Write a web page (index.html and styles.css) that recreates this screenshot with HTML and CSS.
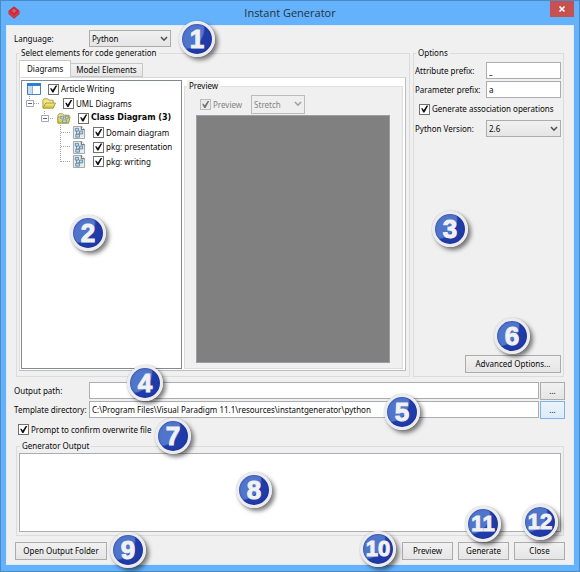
FILE: index.html
```html
<!DOCTYPE html>
<html lang="en">
<head>
<meta charset="utf-8">
<title>Instant Generator</title>
<link rel="stylesheet" href="styles.css">
</head>
<body>
<svg class="defs" aria-hidden="true">
  <defs>
    <linearGradient id="folder" x1="0" y1="0" x2="0" y2="1"><stop offset="0" stop-color="#f8f3a0"/><stop offset="1" stop-color="#cdb92e"/></linearGradient>
    <symbol id="chevron" viewBox="0 0 8 6"><path d="M1 1l3 3.2L7 1" fill="none" stroke="currentColor" stroke-width="1.6"/></symbol>
    <symbol id="i-folder" viewBox="0 0 15 13">
      <path d="M1 11V3l1-1.5h4L7.500 3H12v3" fill="#f3e98a" stroke="#a39a50"/>
      <path d="M1 11.500L4 6h10.500L12 11.500z" fill="url(#folder)" stroke="#a7962d"/>
    </symbol>
    <symbol id="i-class" viewBox="0 0 15 13">
      <path d="M1 11V3l1-1.500h4L7.500 3H13v3" fill="#ece49a" stroke="#a39a50"/>
      <path d="M1 11.500V5h13l-1.500 6.500z" fill="url(#folder)" stroke="#a7962d"/>
      <path d="M4 4h3v3H4zM9 4h3v3H9zM6 8h4v3H6z" fill="#bcd6e4" stroke="#658696" stroke-width=".7"/>
    </symbol>
    <symbol id="i-diagram" viewBox="0 0 14 14">
      <path d="M1 .5h9L13 4v9.500H1z" fill="#e6ebee" stroke="#9aa1a6"/>
      <path d="M9.500.500V4H13" fill="#fff" stroke="#555"/>
      <path d="M4.500 5v5M9 6L6 9" stroke="#54748c" fill="none"/>
      <path d="M3 2.500h3.500v3H3zM7.500 5.500H11v3H7.500zM3.500 9h4v3h-4z" fill="#b4d9f3" stroke="#54748c" stroke-width=".8"/>
    </symbol>
  </defs>
</svg>
<div class="window">
  <header class="titlebar">
    <svg class="logo" viewBox="0 0 12 13" aria-hidden="true"><path d="M6 .300l5.500 4.500v3.200L6 12.700.500 8V4.800z" fill="#d8282f"/><path d="M3.500 4.800L6 2.800l2.500 2L6 7z" fill="#b06c86"/><path d="M1 6.500l5 4.200 5-4.200M6 4v3" fill="none" stroke="#a86a88" stroke-width=".7"/></svg>
    <h1 class="title">Instant Generator</h1>
    <button class="close" type="button" aria-label="Close window"><svg viewBox="0 0 8 8"><path d="M1.500 1.500l5 5M6.500 1.500l-5 5" stroke="#fff" stroke-width="1.600"/></svg></button>
  </header>
  <main class="content">
    <div class="row language">
      <label class="row-label" for="lang">Language:</label>
      <div class="select lang-select"><select id="lang"><option>Python</option></select><svg><use href="#chevron"/></svg></div>
      <span class="badge b1">1</span>
    </div>

    <div class="panels">
      <fieldset class="group elements">
        <legend>Select elements for code generation</legend>
        <div class="tabs" role="tablist">
          <button class="tab active" type="button" role="tab" aria-selected="true">Diagrams</button>
          <button class="tab" type="button" role="tab" aria-selected="false">Model Elements</button>
        </div>
        <div class="tabpanel">
          <div class="tree">
            <svg class="lines" viewBox="0 0 160 90" aria-hidden="true">
              <g fill="none" stroke="#a5a5a5" stroke-dasharray="1 1"><path d="M7.500 15v5M12 22.500h5M22.500 30v4M28 37.500h4M38.500 44v37M39 51.500h9M39 65.500h9M39 80.500h9"/></g>
              <g fill="#fff" stroke="#a0a7b0"><path d="M4.500 19.500h7v6h-7zM19.500 34.500h7v6h-7z"/></g>
              <path d="M6 22.500h4M21 37.500h4" stroke="#4a63a0"/>
            </svg>
            <label class="node lvl0"><svg class="icon" viewBox="0 0 14 13"><path d="M.500.500h13v11H.500z" fill="#fff" stroke="#4181bd"/><path d="M0 0h14v3H0z" fill="#2f7fd0"/><path d="M1 3h4v8H1z" fill="#c9dcf0"/><path d="M5.500 3v8" stroke="#8eb4db"/></svg><input type="checkbox" checked>Article Writing</label>
            <label class="node lvl1"><svg class="icon"><use href="#i-folder"/></svg><input type="checkbox" checked>UML Diagrams</label>
            <label class="node lvl2"><svg class="icon"><use href="#i-class"/></svg><input type="checkbox" checked>Class Diagram (3)</label>
            <label class="node lvl3"><svg class="icon"><use href="#i-diagram"/></svg><input type="checkbox" checked>Domain diagram</label>
            <label class="node lvl3"><svg class="icon"><use href="#i-diagram"/></svg><input type="checkbox" checked>pkg: presentation</label>
            <label class="node lvl3"><svg class="icon"><use href="#i-diagram"/></svg><input type="checkbox" checked>pkg: writing</label>
            <span class="badge b2">2</span>
          </div>
          <fieldset class="group preview">
            <legend>Preview</legend>
            <div class="preview-bar">
              <label class="check"><input type="checkbox" checked disabled>Preview</label>
              <div class="select stretch"><select aria-label="Preview size" disabled><option>Stretch</option></select><svg><use href="#chevron"/></svg></div>
            </div>
            <div class="canvas"></div>
          </fieldset>
        </div>
      </fieldset>

      <fieldset class="group options">
        <legend>Options</legend>
        <div class="form">
          <label for="attr">Attribute prefix:</label><input class="text" id="attr" type="text" value="_">
          <label for="param">Parameter prefix:</label><input class="text" id="param" type="text" value="a">
          <label class="check wide"><input type="checkbox" checked>Generate association operations</label>
          <label for="ver">Python Version:</label><div class="select"><select id="ver"><option>2.6</option></select><svg><use href="#chevron"/></svg></div>
        </div>
        <button class="btn advanced" type="button">Advanced Options...</button>
        <span class="badge b3">3</span>
        <span class="badge b6">6</span>
      </fieldset>
    </div>

    <div class="row path">
      <label class="row-label" for="out">Output path:</label>
      <input class="text" id="out" type="text">
      <button class="btn browse" type="button" aria-label="Browse output path">...</button>
      <span class="badge b4">4</span>
    </div>
    <div class="row path">
      <label class="row-label" for="tpl">Template directory:</label>
      <input class="text" id="tpl" type="text" value="C:\Program Files\Visual Paradigm 11.1\resources\instantgenerator\python">
      <button class="btn browse hot" type="button" aria-label="Browse template directory">...</button>
      <span class="badge b5">5</span>
    </div>
    <div class="row prompt">
      <label class="check"><input type="checkbox" checked>Prompt to confirm overwrite file</label>
      <span class="badge b7">7</span>
    </div>

    <fieldset class="group output">
      <legend>Generator Output</legend>
      <textarea aria-label="Generator Output" readonly></textarea>
      <span class="badge b8">8</span>
    </fieldset>

    <footer class="row actions">
      <button class="btn folder-btn" type="button">Open Output Folder</button>
      <button class="btn action" type="button">Preview</button>
      <button class="btn action" type="button">Generate</button>
      <button class="btn action" type="button">Close</button>
      <span class="badge b9">9</span>
      <span class="badge b10">10</span>
      <span class="badge b11">11</span>
      <span class="badge b12">12</span>
    </footer>
  </main>
</div>
</body>
</html>
```
FILE: styles.css
```css
* { box-sizing: border-box; }

body {
  margin: 0;
  color: #080808;
  font: 8px/12px "Noto Sans", "Open Sans", sans-serif;
}

button, input, select, textarea {
  margin: 0;
  font: inherit;
  color: inherit;
  border-radius: 0;
  outline: 0;
}

.defs { position: absolute; width: 0; height: 0; }

.window {
  display: flex;
  flex-direction: column;
  min-height: 100vh;
  padding: 0 5px 6px;
  background: #64b2fc;
  border: 1px solid #4c8ac4;
}

.titlebar {
  display: grid;
  grid-template-columns: 24px 1fr 24px;
  height: 24px;
}
.logo { width: 12px; height: 13px; margin: 5px 0 0 2px; }
.title {
  margin: 0;
  text-align: center;
  color: #26313c;
  font: 11px/24px "Open Sans", "Noto Sans", sans-serif;
}
.close {
  height: 16px;
  padding: 4px 8px;
  border: 0;
  background: #c75050;
}
.close svg { display: block; width: 8px; height: 8px; }

.content {
  flex: 1;
  display: flex;
  flex-direction: column;
  padding: 4px 8px;
  background: #f0f0f0;
  border: 1px solid #dfeaf5;
}

.row { position: relative; display: flex; align-items: center; }
.row-label { flex: none; width: 75px; margin-left: -1px; white-space: nowrap; }
.path .row-label { width: 74px; }
.language { height: 17px; }

.group {
  position: relative;
  min-width: 0;
  margin: 0;
  padding: 0;
  border: 1px solid #dcdcdc;
}
.group > legend { margin-left: 1px; padding: 0 2px; line-height: 12px; }

.select { position: relative; height: 17px; }
.select select {
  appearance: none;
  display: block;
  width: 100%;
  height: 100%;
  padding: 0 16px 0 2px;
  border: 1px solid #acacac;
  background: linear-gradient(#f1f1f1, #e5e5e5);
}
.select svg {
  position: absolute;
  right: 3px;
  top: 6px;
  width: 8px;
  height: 6px;
  color: #505050;
  pointer-events: none;
}
.select select:disabled { color: #838383; opacity: 1; background: #efefef; border-color: #bcbcbc; }
.select select:disabled + svg { color: #a0a0a0; }
.lang-select { width: 82px; }

.text {
  flex: 1;
  min-width: 0;
  height: 17px;
  padding: 0 2px;
  border: 1px solid #abadb3;
  background: #fff;
}

.btn {
  height: 18px;
  padding: 0;
  border: 1px solid #acacac;
  background: linear-gradient(#f1f1f1, #e5e5e5);
  white-space: nowrap;
}

input[type="checkbox"] {
  appearance: none;
  flex: none;
  width: 11px;
  height: 11px;
  border: 1px solid #707070;
  background: #fff;
}
input[type="checkbox"]:checked::after {
  content: "";
  display: block;
  width: 9px;
  height: 9px;
  background: #111;
  clip-path: polygon(12% 42%, 28% 42%, 42% 62%, 74% 12%, 92% 12%, 50% 88%, 36% 88%);
}
input[type="checkbox"]:disabled { border-color: #bcbcbc; background: #eaeaea; }
input[type="checkbox"]:disabled::after { background: #707070; }
.check { display: flex; align-items: center; gap: 2px; white-space: nowrap; }

.panels {
  flex: 1;
  display: grid;
  grid-template-columns: 1fr 151px;
  gap: 3px;
  padding: 0 1px;
}

.elements { display: flex; flex-direction: column; padding: 1px 3px 5px 2px; }
.elements > legend { margin-left: 0; }
.tabs { display: flex; align-items: flex-end; height: 17px; position: relative; }
.tab {
  height: 14px;
  padding: 0 5px;
  border: 1px solid #c8c8c8;
  border-left: 0;
  background: linear-gradient(#f1f1f1, #e6e6e6);
  line-height: 12px;
}
.tab.active {
  height: 17px;
  padding: 0 7px 1px;
  border-left: 1px solid #d4d4d4;
  border-bottom: 0;
  background: #fff;
}
.tabpanel {
  flex: 1;
  display: grid;
  grid-template-columns: 161px 1fr;
  gap: 2px;
  padding: 2px 2px 1px 1px;
  border: 1px solid #bdbdbd;
  border-left-color: #dcdcdc;
  border-top-color: #d8d8d8;
  background: #fff;
}

.tree {
  position: relative;
  display: grid;
  grid-template-rows: 14px 15px 14px 15px 14px 15px;
  align-content: start;
  padding-top: 1px;
  border: 1px solid #828790;
  background: #fff;
}
.lines { position: absolute; left: 0; top: 0; width: 160px; height: 90px; }
.node { position: relative; display: flex; align-items: center; white-space: nowrap; }
.node .icon { flex: none; width: 14px; height: 13px; margin-right: 7px; }
.node input { margin-right: 2px; }
.lvl0 { padding-left: 5px; }
.lvl1 { padding-left: 20px; }
.lvl2 { padding-left: 35px; font: 700 8px/12px "DejaVu Sans", sans-serif; }
.lvl3 { padding-left: 50px; }

.preview {
  display: flex;
  flex-direction: column;
  padding: 3px 12px 5px 11px;
  background: #f0f0f0;
  border-top-color: #e2e2e2;
}
.preview > legend { margin-left: -9px; background: #f0f0f0; }
.preview-bar { display: flex; align-items: center; gap: 9px; height: 19px; margin: 0 0 1px 4px; color: #838383; }
.stretch { width: 54px; height: 19px; }
.canvas { flex: 1; background: #808080; border: 1px solid #9b9fa5; }

.options { display: flex; flex-direction: column; padding: 3px 2px 3px 1px; }
.form { display: grid; grid-template-columns: 71px 1fr; row-gap: 2px; align-items: center; }
.form > label { white-space: nowrap; }
.form .text { width: 100%; }
.form .wide { grid-column: 1 / -1; height: 18px; padding-left: 4px; }
.advanced { width: 96px; margin: auto 0 0 auto; }

.path { height: 19px; gap: 1px; }
.panels + .path { margin-top: 4px; }
.browse { width: 25px; }
.hot { border-color: #7eb4ea; background: linear-gradient(#ecf4fc, #dcecfc); }
.prompt { height: 21px; padding-left: 3px; }

.output { height: 96px; margin: 0 1px 6px; padding: 1px 2px 4px; }
textarea { display: block; width: 100%; height: 79px; border: 1px solid #abadb3; background: #fff; resize: none; padding: 2px; }

.actions { gap: 5px; }
.folder-btn { width: 92px; margin-right: auto; }
.action { width: 51px; }

.badge {
  position: absolute;
  z-index: 2;
  width: 36px;
  height: 36px;
  border: 3px solid #ececf0;
  border-radius: 50%;
  background: radial-gradient(circle at 5% 15%, #5075cb 0 52%, #1f3ca9 56%, #203aa7 100%);
  box-shadow: 3px 3px 4px rgba(0, 0, 0, .5), 0 0 1px rgba(0, 0, 0, .4), inset 0 0 2px #142a83;
  color: #f1f1f1;
  font: 700 26px/30px "Liberation Sans", Arial, sans-serif;
  text-align: center;
  -webkit-text-stroke: 1px #f1f1f1;
  pointer-events: none;
}
.b10, .b11, .b12 { display: flex; justify-content: center; font-size: 22px; }
.b1 { left: 164px; top: -9px; }
.b2 { left: 48px; top: 134px; }
.b3 { left: 18px; top: 152px; }
.b4 { left: 112px; top: -16px; }
.b5 { right: 145px; top: -6px; }
.b6 { right: 33px; bottom: 22px; }
.b7 { left: 140px; top: -1px; }
.b8 { left: 219px; top: 20px; }
.b9 { left: 95px; top: -10px; }
.b10 { right: 169px; top: -11px; }
.b11 { right: 64px; top: -36px; }
.b12 { right: 7px; top: -38px; }
```
